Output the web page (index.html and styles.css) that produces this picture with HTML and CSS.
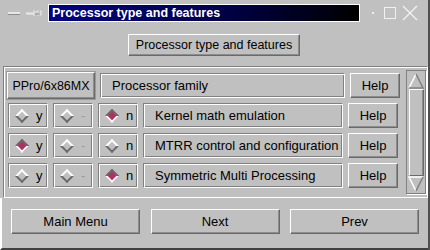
FILE: index.html
```html
<!DOCTYPE html>
<html lang="en">
<head>
  <meta charset="UTF-8">
  <title>Processor type and features</title>
  <link rel="stylesheet" href="styles.css">
</head>
<body>
  <div class="window">
    <!-- Window manager title bar -->
    <div class="titlebar">
      <span class="tb-dash"></span>
      <svg class="tb-pin" width="16" height="8" viewBox="0 0 16 8">
        <path d="M0 4.5H8" stroke="#e8e8e8" stroke-width="2"/>
        <path d="M8 1V7M10 2V6M12 1V7M14 2H15V6H14" stroke="#ececec" stroke-width="1" fill="none"/>
        <path d="M9 5H13" stroke="#808080" stroke-width="1"/>
      </svg>
      <div class="title">Processor type and features</div>
      <span class="tb-dot"></span>
      <span class="tb-square"></span>
      <svg class="tb-close" width="16" height="16" viewBox="0 0 16 16">
        <path d="M1 1L15 15M15 1L1 15" stroke="#f4f4f4" stroke-width="1.2"/>
      </svg>
    </div>

    <div class="client">
      <div class="header">
        <button class="btn heading-btn">Processor type and features</button>
      </div>

      <div class="frame">
        <div class="rows">
          <div class="row">
            <button class="btn choice-btn">PPro/6x86MX</button>
            <div class="label family">Processor family</div>
            <button class="btn help">Help</button>
          </div>

          <div class="row">
            <div class="radio"><span class="diamond"></span>y</div>
            <div class="radio disabled"><span class="diamond"></span>-</div>
            <div class="radio"><span class="diamond on"></span>n</div>
            <div class="label">Kernel math emulation</div>
            <button class="btn help">Help</button>
          </div>

          <div class="row">
            <div class="radio"><span class="diamond on"></span>y</div>
            <div class="radio disabled"><span class="diamond"></span>-</div>
            <div class="radio"><span class="diamond"></span>n</div>
            <div class="label">MTRR control and configuration</div>
            <button class="btn help">Help</button>
          </div>

          <div class="row">
            <div class="radio"><span class="diamond"></span>y</div>
            <div class="radio disabled"><span class="diamond"></span>-</div>
            <div class="radio"><span class="diamond on"></span>n</div>
            <div class="label">Symmetric Multi Processing</div>
            <button class="btn help">Help</button>
          </div>
        </div>

        <div class="scrollbar">
          <svg class="arrow" width="16" height="16" viewBox="0 0 16 16">
            <path d="M1 15L8 1" stroke="#fff" stroke-width="1.5" fill="none"/>
            <path d="M8 1L15 15H1" stroke="#808080" stroke-width="1.5" fill="none"/>
          </svg>
          <div class="slider"></div>
          <svg class="arrow" width="16" height="16" viewBox="0 0 16 16">
            <path d="M15 1H1L8 15" stroke="#fff" stroke-width="1.5" fill="none"/>
            <path d="M8 15L15 1" stroke="#808080" stroke-width="1.5" fill="none"/>
          </svg>
        </div>
      </div>

      <div class="nav">
        <button class="btn nav-btn">Main Menu</button>
        <button class="btn nav-btn">Next</button>
        <button class="btn nav-btn">Prev</button>
      </div>
    </div>
  </div>
</body>
</html>
```

FILE: styles.css
```css
/* Base */
body {
  margin: 0;
  background: #c0c0c0;
  font-family: "Liberation Sans", Arial, sans-serif;
  font-size: 13px;
  color: #000;
}

.window {
  width: 430px;
  height: 250px;
  box-sizing: border-box;
  border-right: 2px solid #505050;
  overflow: hidden;
}

/* Title bar */
.titlebar {
  height: 26px;
  display: flex;
  align-items: center;
  padding: 0 0 0 8px;
  box-sizing: border-box;
}

.tb-dash {
  width: 12px;
  height: 2px;
  background: #e6e6e6;
  border-bottom: 1px solid #8c8c8c;
  margin-top: 1px;
}

.tb-pin {
  margin-left: 6px;
}

.title {
  margin-left: 6px;
  width: 312px;
  height: 18px;
  box-sizing: border-box;
  border: 1px solid #fff;
  background: linear-gradient(90deg, #000080 0%, #00004a 55%, #000000 100%);
  color: #fff;
  font-weight: bold;
  font-size: 12.5px;
  line-height: 16px;
  padding-left: 3px;
}

.tb-dot {
  width: 2px;
  height: 2px;
  background: #f0f0f0;
  margin-left: 12px;
}

.tb-square {
  width: 10px;
  height: 10px;
  border: 1px solid #f0f0f0;
  margin-left: 10px;
}

.tb-close {
  margin-left: 6px;
}

/* Client area */
.client {
  height: 224px;
  display: flex;
  flex-direction: column;
}

.header {
  display: flex;
  justify-content: center;
  padding: 8px 0 10px 0;
}

.btn {
  font-family: inherit;
  font-size: 13px;
  color: #000;
  background: #c0c0c0;
  border: 1px solid;
  border-color: #fff #6a6a6a #6a6a6a #fff;
  box-shadow: inset -1px -1px #8c8c8c;
  border-radius: 0;
  padding: 0;
  margin: 0;
  box-sizing: border-box;
}

.heading-btn {
  width: 172px;
  height: 22px;
  font-size: 12.5px;
}

/* Options frame */
.frame {
  display: flex;
  margin-left: 3px;
  width: 425px;
  height: 132px;
  box-sizing: border-box;
  border: 1px solid;
  border-color: #808080 #fff #fff #808080;
  box-shadow: inset 1px 1px #fff;
  padding: 5px 0 0 4px;
}

.rows {
  display: flex;
  flex-direction: column;
  gap: 5px;
  width: 394px;
  padding-top: 1px;
}

.row {
  display: flex;
  gap: 5px;
  height: 25px;
}

.label {
  width: 200px;
  box-sizing: border-box;
  border: 1px solid;
  border-color: #808080 #fff #fff #808080;
  box-shadow: inset 1px 1px #fff, inset -1px -1px #808080;
  line-height: 23px;
  padding-left: 11px;
  white-space: nowrap;
}

.family {
  width: 245px;
}

.choice-btn {
  width: 88px;
  margin: -1px 0 -1px -1px;
  height: 27px;
  outline: 1px solid #9a9a9a;
  font-size: 12.5px;
}

.help {
  width: 50px;
  height: 25px;
}

/* Radio buttons */
.radio {
  width: 40px;
  box-sizing: border-box;
  border: 1px solid;
  border-color: #808080 #fff #fff #808080;
  box-shadow: inset 1px 1px #fff, inset -1px -1px #808080;
  display: flex;
  align-items: center;
  padding-left: 8px;
  gap: 9px;
}

.radio.disabled {
  color: #9c9c9c;
}

.diamond {
  width: 10px;
  height: 10px;
  transform: rotate(45deg);
  border: 2px solid;
  border-color: #fff #6a6a6a #6a6a6a #fff;
  background: #c0c0c0;
  flex: none;
  box-sizing: border-box;
}

.diamond.on {
  border-color: #6a6a6a #fff #fff #6a6a6a;
  background: #b03060;
}

/* Scrollbar */
.scrollbar {
  margin-left: 4px;
  margin-top: -2px;
  width: 21px;
  height: 125px;
  box-sizing: border-box;
  border: 1px solid;
  border-color: #808080 #fff #fff #808080;
  box-shadow: inset -1px -1px #808080;
  display: flex;
  flex-direction: column;
  align-items: center;
  padding: 2px 1px 2px 0;
}

.arrow {
  flex: none;
}

.slider {
  flex: 1;
  width: 15px;
  box-sizing: border-box;
  border: 1px solid;
  border-color: #fff #6a6a6a #6a6a6a #fff;
  box-shadow: inset -1px 0 #8c8c8c;
}

/* Navigation */
.nav {
  display: flex;
  justify-content: space-between;
  padding: 11px 9px 0 9px;
  flex: 1;
  border-left: 2px solid #fff;
  border-bottom: 2px solid #404040;
  box-sizing: border-box;
}

.nav-btn {
  width: 129px;
  height: 25px;
}
```
